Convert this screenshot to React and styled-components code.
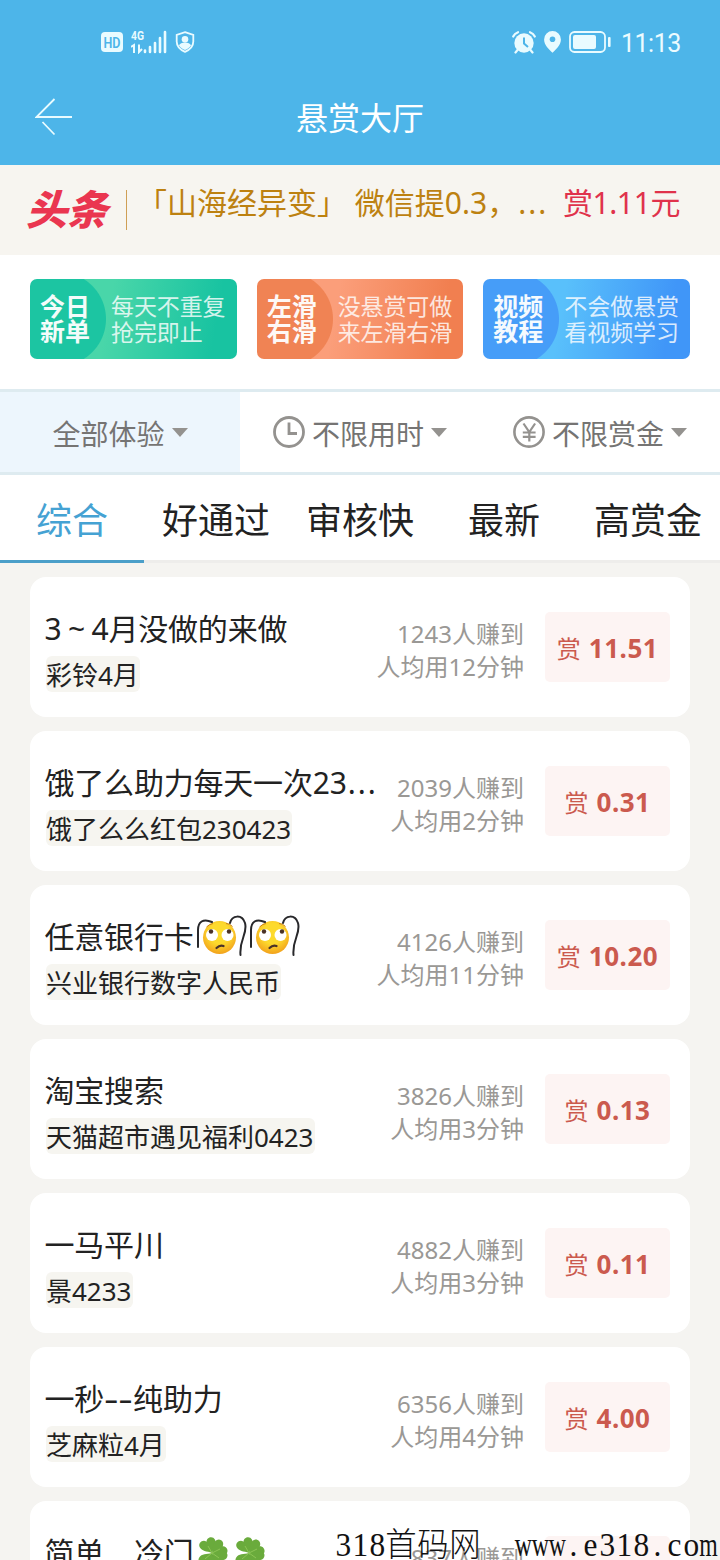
import styled, { createGlobalStyle } from "styled-components";

const GlobalStyle = createGlobalStyle`
  * {
    box-sizing: border-box;
  }
  body {
    margin: 0;
    font-family: "Noto Sans", "Noto Sans CJK SC", sans-serif;
    background: #f5f4f1;
    color: #222;
  }
`;

const Page = styled.div`
  position: relative;
  width: 720px;
  height: 1560px;
  overflow: hidden;
  background: #f5f4f1;
`;

const Header = styled.header`
  height: 165px;
  background: #4db5e9;
  color: #fff;
`;

const StatusBar = styled.div`
  display: flex;
  align-items: center;
  justify-content: space-between;
  height: 84px;
  padding: 0 40px 0 101px;
`;

const StatusGroup = styled.div`
  display: flex;
  align-items: center;
  gap: 8px;
`;

const Clock = styled.span`
  width: 59px;
  margin-left: 2px;
  padding-top: 3px;
  font-family: Roboto, sans-serif;
  font-size: 25px;
  line-height: 30px;
  letter-spacing: -0.5px;
  color: #ecfbff;
`;

const NavBar = styled.div`
  display: grid;
  grid-template-columns: 108px 1fr 108px;
  align-items: center;
  height: 67px;
`;

const BackButton = styled.button`
  display: flex;
  padding: 0 0 2px 35px;
  border: none;
  background: none;
`;

const PageTitle = styled.h1`
  margin: 0;
  font-size: 32px;
  font-weight: 400;
  line-height: 40px;
  text-align: center;
`;

const Notice = styled.section`
  display: flex;
  height: 90px;
  padding: 18px 40px 0 27px;
  background: #f7f5f0;
  font-size: 30px;
  line-height: 40px;
  white-space: nowrap;
`;

const Logo = styled.span`
  flex: none;
  width: 81px;
  margin-top: 4px;
  font-family: "Noto Sans CJK SC", sans-serif;
  font-size: 41px;
  font-weight: 900;
  line-height: 40px;
  letter-spacing: -0.5px;
  color: #ea3650;
  transform: skewX(-16deg);
`;

const Divider = styled.span`
  width: 1px;
  height: 40px;
  margin: 7px 10px 0 18px;
  background: #cf9f55;
`;

const NoticeText = styled.span`
  flex: 1;
  color: #bd8110;
`;

const Ellipsis = styled.span`
  margin-left: 1px;
  letter-spacing: 2px;
  font-family: "Noto Sans", sans-serif;
`;

const NoticeReward = styled.span`
  letter-spacing: -0.4px;
  color: #e0324b;
`;

const Banners = styled.section`
  display: grid;
  grid-template-columns: repeat(3, 1fr);
  gap: 20px;
  height: 134px;
  padding: 24px 30px 0;
  background: #fff;
`;

const BannerCard = styled.div`
  display: flex;
  align-items: center;
  height: 80px;
  border-radius: 7px;
  color: #fff;
  white-space: nowrap;
  background: radial-gradient(
      circle at 29px 40px,
      ${(props) => props.$solid} 46.5px,
      transparent 47.5px
    ),
    linear-gradient(${(props) => props.$solid}, ${(props) => props.$solid}) 0 0 /
      29px 100% no-repeat,
    linear-gradient(100deg, ${(props) => props.$from} 38%, ${(props) => props.$to} 88%);
`;

const BannerName = styled.div`
  width: 81px;
  padding-left: 10px;
  font-size: 25px;
  font-weight: 700;
  line-height: 25px;
  opacity: 0.95;
`;

const BannerText = styled.div`
  font-size: 23px;
  line-height: 26px;
  letter-spacing: -0.1px;
  opacity: 0.8;
`;

const Filters = styled.section`
  display: grid;
  grid-template-columns: repeat(3, 1fr);
  height: 86px;
  border-top: 3px solid #deebf0;
  border-bottom: 3px solid #deebf0;
  background: #fff;
`;

const Filter = styled.button`
  display: flex;
  align-items: center;
  justify-content: center;
  gap: 7px;
  padding: 0;
  border: none;
  background: ${(props) => (props.$active ? "#edf6fd" : "#fff")};
  font: inherit;
  font-size: 28px;
  line-height: 40px;
  color: #757473;
`;

const FilterLabel = styled.span`
  padding-top: 4px;
`;

const Caret = styled.span`
  border: 8px solid transparent;
  border-top: 9px solid #94928f;
  border-bottom: 0;
`;

const Tabs = styled.nav`
  display: grid;
  grid-template-columns: repeat(5, 1fr);
  height: 88px;
  background: #fff;
`;

const Tab = styled.button`
  padding: 6px 0 0;
  border: none;
  border-bottom: 3px solid ${(props) => (props.$active ? "#4b9fc9" : "#eeedeb")};
  background: none;
  font: inherit;
  font-size: 36px;
  line-height: 40px;
  color: ${(props) => (props.$active ? "#45a2d3" : "#222")};
  white-space: nowrap;
`;

const List = styled.main`
  display: flex;
  flex-direction: column;
  gap: 14px;
  padding: 14px 30px 0;
`;

const Card = styled.article`
  display: flex;
  flex: none;
  align-items: center;
  height: 140px;
  padding: 0 20px 0 15px;
  border-radius: 16px;
  background: #fff;
  white-space: nowrap;
`;

const CardMain = styled.div`
  flex: 1;
  min-width: 0;
`;

const CardTitle = styled.h2`
  display: flex;
  align-items: center;
  height: 40px;
  margin: 7px 0 0 -0.5px;
  font-size: 30px;
  font-weight: 400;
  line-height: 40px;
  letter-spacing: -0.2px;
`;

// the two hyphens are drawn a full half-em wide
const Dashes = styled.span`
  width: 29px;
  transform: scaleX(1.5);
  transform-origin: left;
`;

const Tilde = styled.span`
  width: 30px;
  text-align: center;
`;

const Tag = styled.span`
  display: inline-block;
  height: 36px;
  margin: 7px 0 0 1px;
  padding: 1px 1px 0 0;
  border-radius: 6px;
  background: #f6f5f0;
  font-size: 26px;
  line-height: 36px;
`;

const Meta = styled.div`
  margin-top: 5px;
  font-size: 24px;
  line-height: 33px;
  text-align: right;
  color: #9a9895;
`;

const Price = styled.div`
  display: flex;
  align-items: center;
  justify-content: center;
  gap: 8px;
  width: 125px;
  height: 70px;
  margin-left: 21px;
  border-radius: 5px;
  background: #fdf4f3;
  font-size: 24px;
  color: #cb5a4e;

  b {
    padding-top: 1px;
    font-size: 26px;
    letter-spacing: 0.5px;
  }
`;

const Watermark = styled.div`
  position: absolute;
  left: 335px;
  bottom: -5px;
  display: flex;
  font-family: "Liberation Serif", "Noto Sans CJK SC", serif;
  font-size: 33px;
  font-weight: 300;
  line-height: 40px;
  color: #111;
`;

const Glyph = styled.span`
  display: flex;
  justify-content: center;
  width: ${(props) => props.$width}px;
  transform: scaleX(${(props) => (props.$narrow ? 0.72 : 0.95)});
`;

const HdIcon = () => (
  <svg width="22" height="20" viewBox="0 0 22 20">
    <rect width="22" height="20" rx="4" fill="#e9fbff" />
    <text x="11" y="15.5" textAnchor="middle" fontSize="15" fontWeight="600" fontFamily="Roboto" textLength="17" lengthAdjust="spacingAndGlyphs" fill="#4db5e9">
      HD
    </text>
  </svg>
);

const SignalIcon = () => (
  <svg width="36" height="24" viewBox="0 0 36 24">
    <text x="0" y="10" fontSize="13" fontWeight="700" fontFamily="Roboto" textLength="13" lengthAdjust="spacingAndGlyphs" fill="#e9fbff">
      4G
    </text>
    <g stroke="#e9fbff" fill="none" strokeWidth="2">
      <path d="M0 17l3-2v8M8 14.5v7.5l3-3" />
      <path d="M14 22v-1.5M19 22v-5M24 22v-9M29 22V8M34 22V2" strokeWidth="2.6" strokeLinecap="round" />
    </g>
  </svg>
);

const ShieldIcon = () => (
  <svg width="20" height="22" viewBox="0 0 20 22">
    <path d="M10 1.2l8.3 2.7v6.6c0 5-3.6 8.3-8.3 10.3-4.7-2-8.3-5.3-8.3-10.3V3.9z" fill="none" stroke="#e9fbff" strokeWidth="1.8" />
    <circle cx="10" cy="8.3" r="3.3" fill="#e9fbff" />
    <path d="M4 14.5c1-4 11-4 12 0-1.5 2.2-3.7 3.7-6 4.6-2.3-.9-4.5-2.4-6-4.6z" fill="#e9fbff" />
  </svg>
);

const AlarmIcon = () => (
  <svg width="24" height="23" viewBox="0 0 24 23">
    <circle cx="12" cy="12" r="9.7" fill="#e9fbff" />
    <path d="M1.2 5.5Q2.5 2.5 6 1.2M22.8 5.5Q21.5 2.5 18 1.2M5.5 19l-2 2.5M18.5 19l2 2.5" stroke="#e9fbff" strokeWidth="2.2" strokeLinecap="round" fill="none" />
    <path d="M12 6.5v6l4 3.5" stroke="#4db5e9" strokeWidth="2" fill="none" />
  </svg>
);

const PinIcon = () => (
  <svg width="17" height="22" viewBox="0 0 17 22">
    <path d="M8.5 0A8.4 8.4 0 0 0 .1 8.4C.1 14 5 18 8.5 21.8 12 18 16.9 14 16.9 8.4A8.4 8.4 0 0 0 8.5 0z" fill="#e9fbff" />
    <circle cx="8.5" cy="8.2" r="2.8" fill="#4db5e9" />
  </svg>
);

const BatteryIcon = () => (
  <svg width="42" height="22" viewBox="0 0 42 22">
    <rect x="1" y="1" width="35" height="20" rx="4.5" fill="none" stroke="#e9fbff" strokeWidth="1.8" />
    <rect x="4" y="4" width="23" height="14" rx="2" fill="#e9fbff" />
    <rect x="39" y="6" width="2.6" height="10" rx="1" fill="#e9fbff" />
  </svg>
);

const BackIcon = () => (
  <svg width="38" height="38" viewBox="0 0 38 38" fill="none" stroke="#e9fbff" strokeWidth="1.8">
    <path d="M19.5 1L1.5 19H37M7.5 24l12 12.5" />
  </svg>
);

const ClockIcon = () => (
  <svg width="32" height="32" viewBox="0 0 32 32" fill="none" stroke="#94928f" strokeWidth="2.8">
    <circle cx="16" cy="16" r="14.5" />
    <path d="M16 6.5v11h8" />
  </svg>
);

const YenIcon = () => (
  <svg width="32" height="32" viewBox="0 0 32 32" fill="none" stroke="#94928f" strokeWidth="2.6">
    <circle cx="16" cy="16" r="14.6" />
    <path d="M10.5 7.5l5.8 8.5 5.8-8.5M9.8 16.5h12.8M9.8 20.8h12.8M16.3 16v9.5" strokeWidth="2.2" />
  </svg>
);

// rolling eyes face with its two long arms
const ArmsFace = () => (
  <svg width="53" height="44" viewBox="0 0 53 44">
    <defs>
      <radialGradient id="face" cx="50%" cy="38%" r="62%">
        <stop offset="0.5" stopColor="#fdda2d" />
        <stop offset="1" stopColor="#f2a21c" />
      </radialGradient>
    </defs>
    <circle cx="25.5" cy="22.5" r="16.5" fill="url(#face)" />
    <circle cx="18" cy="20" r="6" fill="#fff" />
    <circle cx="33.5" cy="20" r="6" fill="#fff" />
    <circle cx="17" cy="16.5" r="2.2" fill="#4a3227" />
    <circle cx="35" cy="16.5" r="2.2" fill="#4a3227" />
    <path d="M12.5 12q3-3 6.5-3.5M32 8.5q4 0 6.5 3" stroke="#c98216" strokeWidth="1" fill="none" />
    <path d="M22.5 33q3.5-3.5 7-2" stroke="#4a3227" strokeWidth="2.2" strokeLinecap="round" fill="none" />
    <g stroke="#28282b" strokeWidth="2" fill="none" strokeLinecap="round">
      <path d="M4 32V15C4 7 9 3 18 7" />
      <path d="M36 8C38 0 48-1 51 8c3 11-6 16-4.5 32" />
    </g>
  </svg>
);

const Clover = () => (
  <svg width="37" height="36" viewBox="0 0 37 36">
    <path d="M18 20q1 8 5 13" stroke="#518c2c" strokeWidth="2.5" fill="none" />
    <g fill="#6aab3c">
      {[-26, 58, 124, 212].map((angle) => (
        <path
          key={angle}
          transform={`rotate(${angle} 18 18)`}
          d="M18 18C14 14 9.5 12 9.5 7.5c0-5 6.5-6 8.5-2 2-4 8.5-3 8.5 2C26.5 12 22 14 18 18z"
        />
      ))}
    </g>
    <path d="M14 11l4 7 8-4M18 18l-7 6M18 18l7 5" stroke="#8cc455" strokeWidth="1" fill="none" />
  </svg>
);

const banners = [
  { name: ["今日", "新单"], text: ["每天不重复", "抢完即止"], solid: "#1cc5a2", from: "#49d6a9", to: "#18c3a1" },
  { name: ["左滑", "右滑"], text: ["没悬赏可做", "来左滑右滑"], solid: "#f08354", from: "#fb9e7a", to: "#f17f50" },
  { name: ["视频", "教程"], text: ["不会做悬赏", "看视频学习"], solid: "#469df8", from: "#59c0fb", to: "#4096f8" },
];

const tabs = ["综合", "好通过", "审核快", "最新", "高赏金"];

const tasks = [
  { title: <>3<Tilde>~</Tilde>4月没做的来做</>, tag: "彩铃4月", people: 1243, minutes: 12, price: "11.51" },
  { title: <>饿了么助力每天一次23<Ellipsis>...</Ellipsis></>, tag: "饿了么么红包230423", people: 2039, minutes: 2, price: "0.31" },
  { title: "任意银行卡", icon: ArmsFace, tag: "兴业银行数字人民币", people: 4126, minutes: 11, price: "10.20" },
  { title: "淘宝搜索", tag: "天猫超市遇见福利0423", people: 3826, minutes: 3, price: "0.13" },
  { title: "一马平川", tag: "景4233", people: 4882, minutes: 3, price: "0.11" },
  { title: <>一秒<Dashes>--</Dashes>纯助力</>, tag: "芝麻粒4月", people: 6356, minutes: 4, price: "4.00" },
  { title: "简单\u3000冷门", icon: Clover, tag: "4月", people: 837, minutes: 3, price: "0.20" },
];

const TaskCard = ({ task }) => {
  const Icon = task.icon;
  return (
    <Card>
      <CardMain>
        <CardTitle>
          {task.title}
          {Icon && (
            <>
              <Icon />
              <Icon />
            </>
          )}
        </CardTitle>
        <Tag>{task.tag}</Tag>
      </CardMain>
      <Meta>
        <div>{task.people}人赚到</div>
        <div>人均用{task.minutes}分钟</div>
      </Meta>
      <Price>
        赏 <b>{task.price}</b>
      </Price>
    </Card>
  );
};

function glyphWidth(char) {
  return char.charCodeAt(0) > 255 ? 32 : 16.8;
}

const App = () => {
  return (
    <Page>
      <GlobalStyle />
      <Header>
        <StatusBar>
          <StatusGroup>
            <HdIcon />
            <SignalIcon />
            <ShieldIcon />
          </StatusGroup>
          <StatusGroup>
            <AlarmIcon />
            <PinIcon />
            <BatteryIcon />
            <Clock>11:13</Clock>
          </StatusGroup>
        </StatusBar>
        <NavBar>
          <BackButton>
            <BackIcon />
          </BackButton>
          <PageTitle>悬赏大厅</PageTitle>
        </NavBar>
      </Header>

      <Notice>
        <Logo>头条</Logo>
        <Divider />
        <NoticeText>
          「山海经异变」 微信提0.3，<Ellipsis>...</Ellipsis>
        </NoticeText>
        <NoticeReward>赏1.11元</NoticeReward>
      </Notice>

      <Banners>
        {banners.map((banner) => (
          <BannerCard key={banner.solid} $solid={banner.solid} $from={banner.from} $to={banner.to}>
            <BannerName>
              {banner.name[0]}
              <br />
              {banner.name[1]}
            </BannerName>
            <BannerText>
              {banner.text[0]}
              <br />
              {banner.text[1]}
            </BannerText>
          </BannerCard>
        ))}
      </Banners>

      <Filters>
        <Filter $active>
          <FilterLabel>全部体验</FilterLabel>
          <Caret />
        </Filter>
        <Filter>
          <ClockIcon />
          <FilterLabel>不限用时</FilterLabel>
          <Caret />
        </Filter>
        <Filter>
          <YenIcon />
          <FilterLabel>不限赏金</FilterLabel>
          <Caret />
        </Filter>
      </Filters>

      <Tabs>
        {tabs.map((tab, i) => (
          <Tab key={tab} $active={i === 0}>
            {tab}
          </Tab>
        ))}
      </Tabs>

      <List>
        {tasks.map((task) => (
          <TaskCard key={task.tag} task={task} />
        ))}
      </List>

      <Watermark>
        {[..."318首码网  www.e318.com"].map((char, i) => (
          <Glyph key={i} $width={glyphWidth(char)} $narrow={char === "w" || char === "m"}>
            {char}
          </Glyph>
        ))}
      </Watermark>
    </Page>
  );
};

export default App;
